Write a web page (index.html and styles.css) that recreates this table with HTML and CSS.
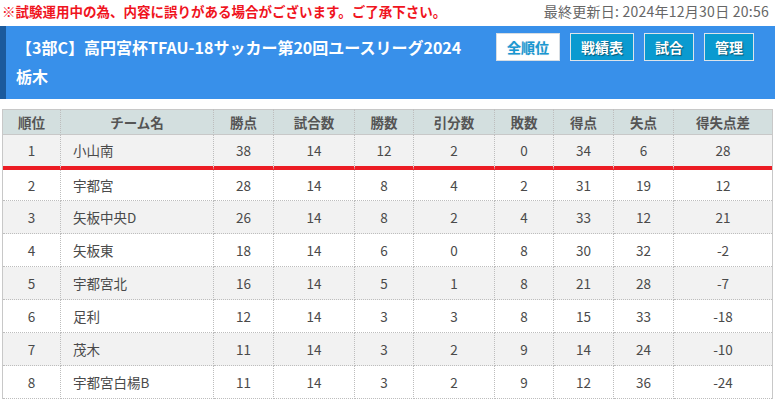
FILE: index.html
```html
<!DOCTYPE html>
<html lang="ja">
<head>
<meta charset="utf-8">
<title>順位表</title>
<link rel="stylesheet" href="styles.css">
</head>
<body>
<div class="topbar">
  <span class="notice">※試験運用中の為、内容に誤りがある場合がございます。ご了承下さい。</span>
  <span class="updated">最終更新日: 2024年12月30日 20:56</span>
</div>
<header class="league">
  <h1 class="league-title">【3部C】高円宮杯TFAU-18サッカー第20回ユースリーグ2024<br>栃木</h1>
  <nav class="league-nav">
    <a class="btn btn-active">全順位</a>
    <a class="btn">戦績表</a>
    <a class="btn">試合</a>
    <a class="btn">管理</a>
  </nav>
</header>
<table class="standings">
  <colgroup>
    <col class="c-rank"><col class="c-team"><col class="c-pts"><col class="c-gp"><col class="c-w"><col class="c-d"><col class="c-l"><col class="c-gf"><col class="c-ga"><col class="c-gd">
  </colgroup>
  <thead>
    <tr><th>順位</th><th>チーム名</th><th>勝点</th><th>試合数</th><th>勝数</th><th>引分数</th><th>敗数</th><th>得点</th><th>失点</th><th>得失点差</th></tr>
  </thead>
  <tbody>
    <tr class="odd first"><td>1</td><td class="team">小山南</td><td>38</td><td>14</td><td>12</td><td>2</td><td>0</td><td>34</td><td>6</td><td>28</td></tr>
    <tr class="second"><td>2</td><td class="team">宇都宮</td><td>28</td><td>14</td><td>8</td><td>4</td><td>2</td><td>31</td><td>19</td><td>12</td></tr>
    <tr class="odd"><td>3</td><td class="team">矢板中央D</td><td>26</td><td>14</td><td>8</td><td>2</td><td>4</td><td>33</td><td>12</td><td>21</td></tr>
    <tr><td>4</td><td class="team">矢板東</td><td>18</td><td>14</td><td>6</td><td>0</td><td>8</td><td>30</td><td>32</td><td>-2</td></tr>
    <tr class="odd"><td>5</td><td class="team">宇都宮北</td><td>16</td><td>14</td><td>5</td><td>1</td><td>8</td><td>21</td><td>28</td><td>-7</td></tr>
    <tr><td>6</td><td class="team">足利</td><td>12</td><td>14</td><td>3</td><td>3</td><td>8</td><td>15</td><td>33</td><td>-18</td></tr>
    <tr class="odd"><td>7</td><td class="team">茂木</td><td>11</td><td>14</td><td>3</td><td>2</td><td>9</td><td>14</td><td>24</td><td>-10</td></tr>
    <tr><td>8</td><td class="team">宇都宮白楊B</td><td>11</td><td>14</td><td>3</td><td>2</td><td>9</td><td>12</td><td>36</td><td>-24</td></tr>
  </tbody>
</table>
</body>
</html>
```
FILE: styles.css
```css
html, body {
  margin: 0;
  padding: 0;
  background: #fff;
}
body {
  font-family: "Noto Sans CJK JP", "Noto Sans", sans-serif;
  color: #444;
}
.topbar {
  display: flex;
  justify-content: space-between;
  align-items: center;
  height: 22px;
  margin-bottom: 4px;
  padding: 0 6px 0 2px;
  line-height: 22px;
}
.notice {
  color: #f0141e;
  font-weight: bold;
  font-size: 13.5px;
}
.updated {
  color: #666;
  font-size: 14px;
  letter-spacing: 0.25px;
}
.league {
  display: flex;
  justify-content: space-between;
  align-items: flex-start;
  background: #3890ea;
  border-left: 6px solid #1b5a9c;
  padding: 7px 21px 8px 10px;
  height: 58px;
}
.league-title {
  margin: 0;
  font-size: 16px;
  font-weight: bold;
  line-height: 29px;
  color: #fff;
}
.league-nav {
  display: flex;
  gap: 10px;
  margin-top: 0;
}
.btn {
  display: block;
  padding: 0 10px;
  height: 26px;
  line-height: 26px;
  border: 1px solid #dde4ea;
  background: #0a9ad0;
  color: #fff;
  font-size: 14px;
  font-weight: bold;
  text-shadow: 1px 1px 1px rgba(0, 0, 0, 0.45);
}
.btn-active {
  background: #fff;
  color: #1a98d2;
  border-color: #d6dde3;
  text-shadow: 0 0 1px rgba(0, 80, 140, 0.3);
}
.standings {
  margin: 10px 0 0 2px;
  width: 770px;
  table-layout: fixed;
  border-collapse: separate;
  border-spacing: 0;
  border-left: 1px solid #c8c8c8;
  border-right: 1px solid #c8c8c8;
  font-size: 13.5px;
}
.c-rank { width: 58px; }
.c-team { width: 153px; }
.c-pts { width: 60px; }
.c-gp { width: 81px; }
.c-w { width: 59px; }
.c-d { width: 81px; }
.c-l { width: 59px; }
.c-gf { width: 60px; }
.c-ga { width: 60px; }
.c-gd { width: 98px; }
.standings th,
.standings td {
  padding: 0;
  text-align: center;
  border-right: 1px dotted #bdbdbd;
  border-bottom: 1px dotted #bdbdbd;
  white-space: nowrap;
}
.standings th:last-child,
.standings td:last-child {
  border-right: none;
}
.standings th {
  background: #d3dfdf;
  color: #555;
  font-weight: bold;
  line-height: 24px;
  border-top: 1px solid #c8c8c8;
  border-bottom: 1px solid #c8c8c8;
}
.standings td {
  line-height: 32px;
  color: #4a4a4a;
}
.standings td.team {
  text-align: left;
  padding-left: 12px;
}
.standings tr.odd td {
  background: #f2f2f2;
}
.standings tr.first td {
  line-height: 31px;
  border-bottom: 4px solid #ec1c24;
}
.standings tr.second td {
  line-height: 30px;
}
```
